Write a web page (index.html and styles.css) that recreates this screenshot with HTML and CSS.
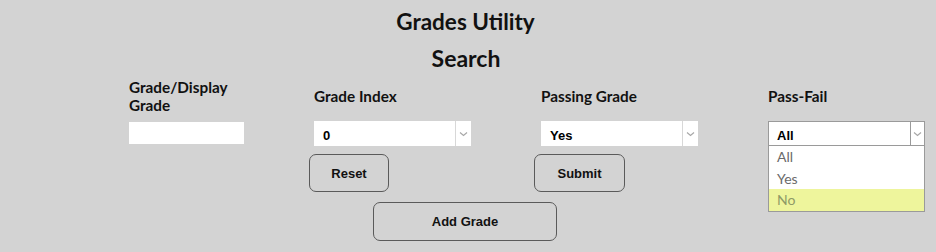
FILE: index.html
```html
<!DOCTYPE html>
<html>
<head>
<meta charset="utf-8">
<link rel="stylesheet" href="styles.css">
</head>
<body>
<div class="page">
  <h1 class="title">Grades Utility</h1>
  <h2 class="subtitle">Search</h2>
  <div class="fields">
    <div class="field">
      <label class="label">Grade/Display Grade</label>
      <div class="text-input"></div>
    </div>
    <div class="field">
      <label class="label">Grade Index</label>
      <div class="select">
        <span class="select-value">0</span>
        <span class="select-arrow"><svg width="9" height="6" viewBox="0 0 9 6"><path d="M1 1.5 L4.5 4.5 L8 1.5" fill="none" stroke="#a8a8a8" stroke-width="1.2"/></svg></span>
      </div>
      <button class="btn btn-reset">Reset</button>
    </div>
    <div class="field">
      <label class="label">Passing Grade</label>
      <div class="select">
        <span class="select-value">Yes</span>
        <span class="select-arrow"><svg width="9" height="6" viewBox="0 0 9 6"><path d="M1 1.5 L4.5 4.5 L8 1.5" fill="none" stroke="#a8a8a8" stroke-width="1.2"/></svg></span>
      </div>
      <button class="btn btn-submit">Submit</button>
    </div>
    <div class="field">
      <label class="label">Pass-Fail</label>
      <div class="select select-open">
        <span class="select-value">All</span>
        <span class="select-arrow"><svg width="9" height="6" viewBox="0 0 9 6"><path d="M1 1.5 L4.5 4.5 L8 1.5" fill="none" stroke="#a8a8a8" stroke-width="1.2"/></svg></span>
        <ul class="options">
          <li class="option">All</li>
          <li class="option">Yes</li>
          <li class="option option-active">No</li>
        </ul>
      </div>
    </div>
  </div>
  <div class="add-row">
    <button class="btn btn-add">Add Grade</button>
  </div>
</div>
</body>
</html>
```
FILE: styles.css
```css
html, body {
  margin: 0;
  padding: 0;
  background: #d3d3d3;
}
body {
  font-family: "Lato", "Noto Sans", sans-serif;
  color: #111;
}
.page {
  width: 936px;
  height: 252px;
  overflow: hidden;
}
.title {
  margin: 0;
  padding-top: 8px;
  padding-right: 5px;
  height: 28px;
  font-size: 22.5px;
  line-height: 28px;
  font-weight: 700;
  text-align: center;
}
.subtitle {
  margin: 0;
  padding-top: 8px;
  padding-right: 4px;
  height: 28px;
  font-size: 23px;
  line-height: 28px;
  font-weight: 700;
  text-align: center;
}
.fields {
  display: grid;
  grid-template-columns: 115px 157px 157px 157px;
  column-gap: 70px;
  padding-left: 129px;
  margin-top: 6px;
}
.field {
  display: flex;
  flex-direction: column;
}
.label {
  height: 36px;
  display: flex;
  align-items: center;
  font-size: 15.3px;
  line-height: 18px;
  font-weight: 700;
  margin-bottom: 7px;
}
.text-input {
  width: 115px;
  height: 22px;
  background: #fff;
  margin-top: 1px;
}
.select {
  position: relative;
  width: 157px;
  height: 25px;
  background: #fff;
  box-sizing: border-box;
  display: flex;
  align-items: center;
}
.select-value {
  flex: 1;
  padding-left: 9px;
  padding-top: 3px;
  font-family: "Liberation Sans", Arial, sans-serif;
  font-size: 13px;
  font-weight: 700;
  color: #000;
}
.select-arrow {
  width: 15px;
  height: 100%;
  border-left: 1px solid #d8d8d8;
  display: flex;
  align-items: center;
  justify-content: center;
}
.select-open {
  border: 1px solid #9a9a9a;
}
.select-open .select-value {
  padding-left: 8px;
}
.select-open .select-arrow {
  border-left: 1px solid #9a9a9a;
  width: 13px;
}
.options {
  position: absolute;
  left: -1px;
  top: 24px;
  width: 157px;
  box-sizing: border-box;
  margin: 0;
  padding: 0;
  list-style: none;
  background: #fff;
  border: 1px solid #9a9a9a;
  border-top: none;
}
.option {
  height: 21.5px;
  line-height: 22px;
  padding-left: 8px;
  font-family: "Lato", "Liberation Sans", sans-serif;
  font-size: 14px;
  color: #6a6a6a;
}
.option-active {
  background: #eef59c;
  color: #8f9a66;
}
.btn {
  font-family: "Liberation Sans", Arial, sans-serif;
  font-size: 13px;
  font-weight: 700;
  color: #111;
  background: transparent;
  border: 1px solid #5a5a5a;
  border-radius: 7px;
  padding: 0;
  box-sizing: border-box;
  cursor: pointer;
}
.btn-reset {
  width: 80px;
  height: 38px;
  margin-top: 8px;
  margin-left: -5px;
}
.btn-submit {
  width: 91px;
  height: 38px;
  margin-top: 8px;
  margin-left: -7px;
}
.add-row {
  padding-left: 373px;
  margin-top: 10px;
}
.btn-add {
  width: 184px;
  height: 39px;
}
```
